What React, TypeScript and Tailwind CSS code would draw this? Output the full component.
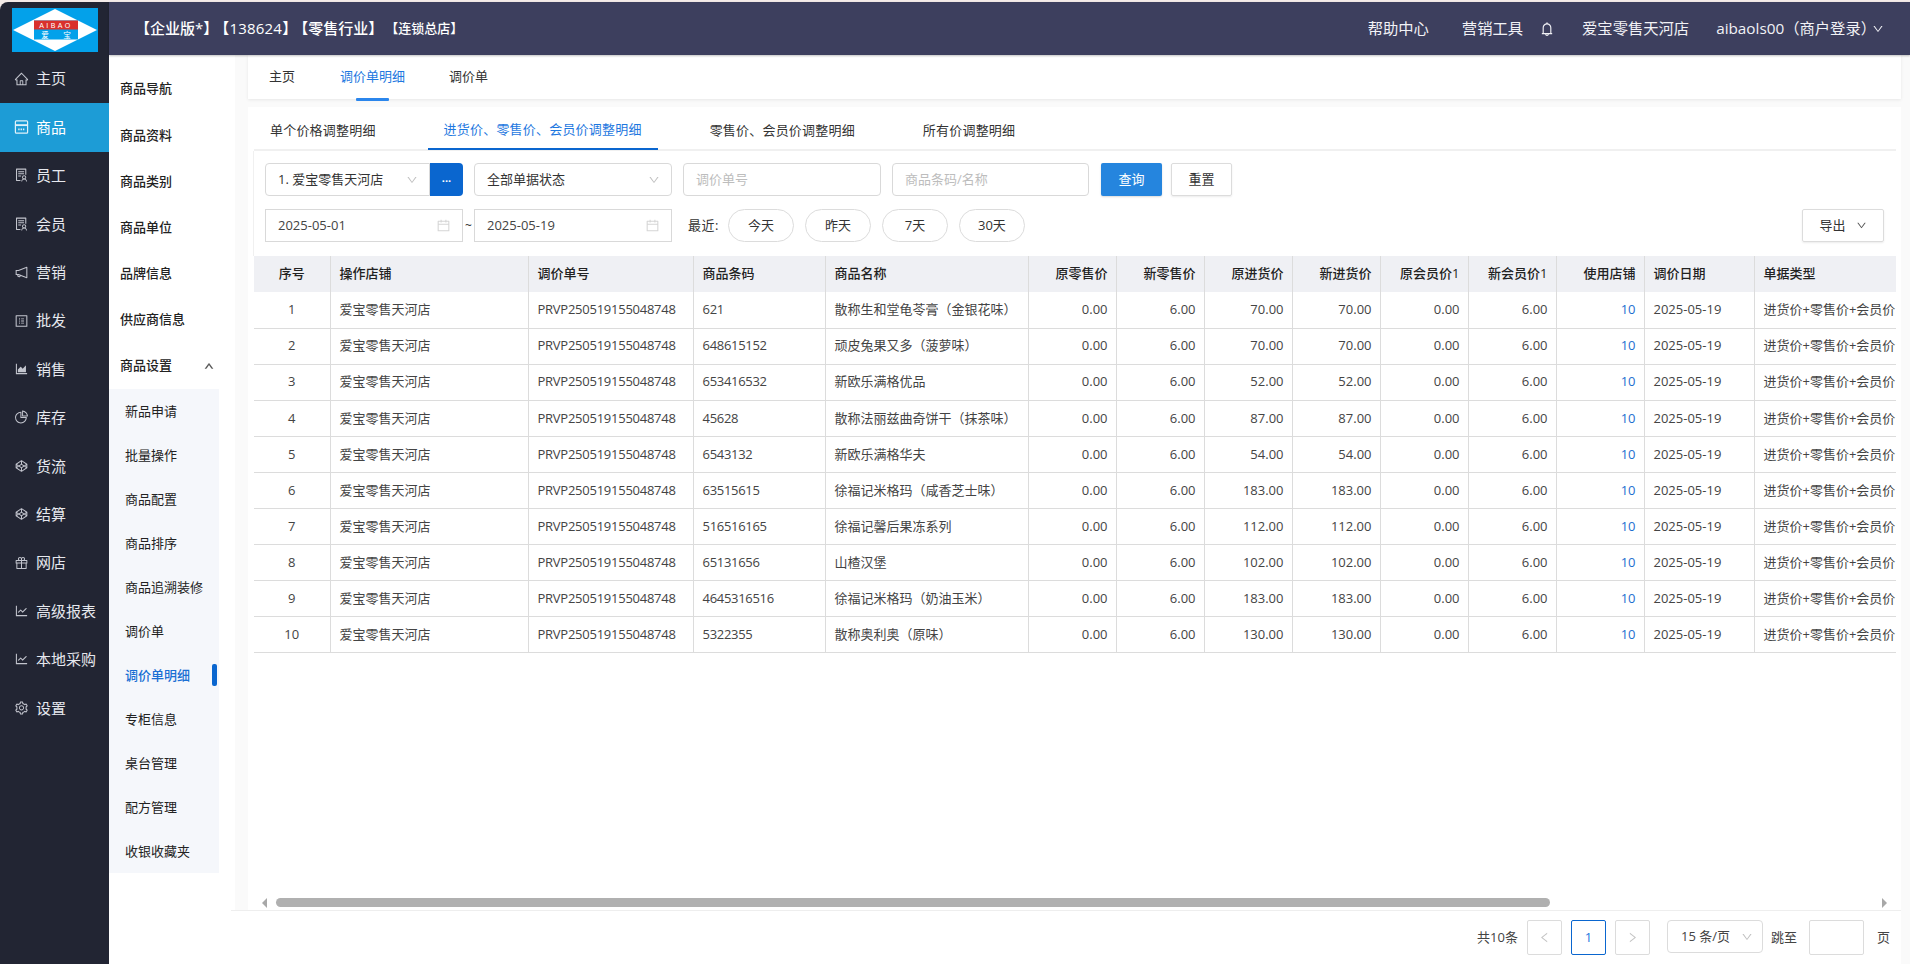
import React from "react";
import {
  AiOutlineHome,
  AiOutlineSolution,
  AiOutlineNotification,
  AiOutlineProfile,
  AiOutlineAreaChart,
  AiOutlinePieChart,
  AiOutlineCodepen,
  AiOutlineGift,
  AiOutlineLineChart,
  AiOutlineSetting,
  AiOutlineBell,
  AiOutlineCalendar,
  AiOutlineDown,
  AiOutlineUp,
  AiOutlineLeft,
  AiOutlineRight,
} from "react-icons/ai";

function GoodsIcon() {
  return (
    <svg width="16" height="16" viewBox="0 0 16 16" fill="none" stroke="currentColor" strokeWidth="1.3">
      <rect x="1.5" y="1.5" width="13" height="13" rx="1" />
      <path d="M1.5 6h13" strokeWidth="2" />
      <path d="M4.5 10.5h7" strokeDasharray="1.5 1" strokeWidth="2" />
    </svg>
  );
}

const nav: [string, React.ReactNode][] = [
  ["主页", <AiOutlineHome size={20} />],
  ["商品", <GoodsIcon />],
  ["员工", <AiOutlineSolution size={18} />],
  ["会员", <AiOutlineSolution size={18} />],
  ["营销", <AiOutlineNotification size={19} />],
  ["批发", <AiOutlineProfile size={18} />],
  ["销售", <AiOutlineAreaChart size={18} />],
  ["库存", <AiOutlinePieChart size={18} />],
  ["货流", <AiOutlineCodepen size={18} />],
  ["结算", <AiOutlineCodepen size={18} />],
  ["网店", <AiOutlineGift size={18} />],
  ["高级报表", <AiOutlineLineChart size={18} />],
  ["本地采购", <AiOutlineLineChart size={18} />],
  ["设置", <AiOutlineSetting size={18} />],
];

const subnav = ["商品导航", "商品资料", "商品类别", "商品单位", "品牌信息", "供应商信息"];
const subsub = ["新品申请", "批量操作", "商品配置", "商品排序", "商品追溯装修", "调价单", "调价单明细", "专柜信息", "桌台管理", "配方管理", "收银收藏夹"];

const rows: [string, string, string][] = [
  ["621", "散称生和堂龟苓膏（金银花味）", "70.00"],
  ["648615152", "顽皮兔果又多（菠萝味）", "70.00"],
  ["653416532", "新欧乐满格优品", "52.00"],
  ["45628", "散称法丽兹曲奇饼干（抹茶味）", "87.00"],
  ["6543132", "新欧乐满格华夫", "54.00"],
  ["63515615", "徐福记米格玛（咸香芝士味）", "183.00"],
  ["516516165", "徐福记馨后果冻系列", "112.00"],
  ["65131656", "山楂汉堡", "102.00"],
  ["4645316516", "徐福记米格玛（奶油玉米）", "183.00"],
  ["5322355", "散称奥利奥（原味）", "130.00"],
];

const leftHeads = ["操作店铺", "调价单号", "商品条码", "商品名称"];
const numHeads = ["原零售价", "新零售价", "原进货价", "新进货价", "原会员价1", "新会员价1", "使用店铺"];

function Logo() {
  return (
    <svg width="86" height="44" viewBox="0 0 86 44" className="block">
      <rect width="86" height="44" fill="#03a1ea" />
      <polygon points="1,22 43,1 85,22 43,43" fill="#ffffff" />
      <rect x="22" y="12.5" width="44" height="19" fill="#03a1ea" />
      <rect x="22" y="12.5" width="44" height="9" fill="#d9302c" />
      <text x="44" y="20" textAnchor="middle" fontSize="7" fill="#ffffff" letterSpacing="2.4" fontFamily="Liberation Sans, sans-serif">AIBAO</text>
      <text x="33" y="30" textAnchor="middle" fontSize="7.5" fill="#ffffff" fontFamily="Noto Sans CJK SC, sans-serif">爱</text>
      <text x="55" y="30" textAnchor="middle" fontSize="7.5" fill="#ffffff" fontFamily="Noto Sans CJK SC, sans-serif">宝</text>
    </svg>
  );
}

function DateBox({ value }: { value: string }) {
  return (
    <div className="w-[198px] h-[33px] border border-[#d9d9d9] flex items-center justify-between pl-3 pr-[11px] text-[13px] text-[#444]">
      <span>{value}</span>
      <AiOutlineCalendar size={15} className="text-[#d5d5d5]" />
    </div>
  );
}

function Pill({ label }: { label: string }) {
  return (
    <div className="w-[66px] h-[33px] rounded-full border border-[#dcdcdc] flex items-center justify-center text-[13px] text-[#333]">
      {label}
    </div>
  );
}

export default function App() {
  return (
    <div className="w-[1910px] h-[964px] overflow-hidden flex flex-col bg-[#f4ebe8] pt-[2px] text-[13px] text-[#333] [font-family:'Open_Sans','Noto_Sans_CJK_SC',sans-serif]">
      <div className="flex flex-1 min-h-0">
        <aside className="w-[109px] shrink-0 bg-[#222533] rounded-tl-[8px] flex flex-col">
          <div className="h-[53px] pt-[6px] pl-[12px]">
            <Logo />
          </div>
          <div>
            {nav.map(([label, icon], i) => (
              <div
                key={label}
                className={
                  i === 1
                    ? "h-[48.4px] flex items-center pl-[14px] gap-[7px] pb-[1px] text-[15px] bg-[#1d9cd6] text-white"
                    : "h-[48.4px] flex items-center pl-[14px] gap-[7px] pb-[1px] text-[15px] text-[#e6e8ee]"
                }
              >
                <span className={i === 1 ? "w-[15px] flex justify-center text-[#dff1fa]" : "w-[15px] flex justify-center text-[#c3c5ce]"}>{icon}</span>
                <span>{label}</span>
              </div>
            ))}
          </div>
        </aside>
        <div className="flex-1 min-w-0 flex flex-col">
          <header className="h-[53px] shrink-0 bg-[#3d3f5e] flex items-center justify-between pl-[26px] pr-[26px] text-white shadow-[0_1px_2px_rgba(0,0,0,0.25)] relative z-10">
            <div className="flex items-center font-medium">
              <span className="text-[15px]">【企业版*】</span>
              <span className="text-[15px] -ml-[4px] tracking-[0.2px]">【138624】</span>
              <span className="text-[15px] -ml-[4px]">【零售行业】</span>
              <span className="text-[13px] ml-[2px]">【连锁总店】</span>
            </div>
            <div className="flex items-center text-[15.3px] text-[#f2f2f6]">
              <span className="mr-[33px]">帮助中心</span>
              <span className="mr-[16px]">营销工具</span>
              <AiOutlineBell size={16} className="mr-[27px]" />
              <span className="mr-[27px]">爱宝零售天河店</span>
              <span className="-mr-[4px]">aibaols00（商户登录）</span>
              <AiOutlineDown size={12} />
            </div>
          </header>
          <div className="flex-1 min-h-0 flex">
            <nav className="w-[126px] shrink-0 bg-white flex flex-col pt-[11px]">
              {subnav.map((s) => (
                <div key={s} className="h-[46.2px] flex items-center pl-[11px] font-medium text-[#222]">{s}</div>
              ))}
              <div className="h-[46.2px] flex items-center justify-between pl-[11px] pr-[21px] font-medium text-[#222]">
                <span>商品设置</span>
                <AiOutlineUp size={10} className="text-[#444]" strokeWidth={60} />
              </div>
              <div className="w-[110px] bg-[#f5f7fb]">
                {subsub.map((s) => (
                  <div key={s} className={s === "调价单明细" ? "relative h-[44px] flex items-center pl-[16px] font-medium text-[#1a6fd4]" : "h-[44px] flex items-center pl-[16px] text-[#222]"}>
                    {s}
                    {s === "调价单明细" && <span className="absolute left-[103px] top-[11px] w-[5px] h-[22px] rounded-[2px] bg-[#0a66cf]" />}
                  </div>
                ))}
              </div>
            </nav>
            <main className="flex-1 min-w-0 bg-[#fafafa] flex flex-col">
              <div className="flex-1 min-h-0 flex flex-col pl-[13px] pr-[9px]">
                <div className="h-[44px] shrink-0 bg-white shadow-[0_1px_3px_rgba(0,0,0,0.08)] flex items-center pl-[21px]">
                  <span className="mr-[45px]">主页</span>
                  <span className="relative mr-[44px] text-[#1e78e0]">
                    调价单明细
                    <span className="absolute left-[16px] right-[16px] top-[31px] h-[3px] rounded-[1px] bg-[#2b86ec]" />
                  </span>
                  <span>调价单</span>
                </div>
                <section className="mt-[8px] flex-1 min-h-0 bg-white pl-[6px] pr-[5px] flex flex-col">
                  <div className="h-[42px] shrink-0 flex gap-9 tracking-[0.2px]">
                    <div className="px-4 h-[43px] pt-[4px] flex items-center">单个价格调整明细</div>
                    <div className="px-4 h-[43px] pt-[4px] flex items-center text-[#1e78e0] border-b-2 border-[#0a66cf] relative z-10">进货价、零售价、会员价调整明细</div>
                    <div className="px-4 h-[43px] pt-[4px] flex items-center">零售价、会员价调整明细</div>
                    <div className="px-4 h-[43px] pt-[4px] flex items-center">所有价调整明细</div>
                  </div>
                  <div className="flex-1 min-h-0 flex flex-col border-t-2 border-[#f0f0f0]">
                    <div className="shrink-0 -ml-[1px] border-l border-[#f0f0f0] pl-[11px] pt-[12px] pb-[14px]">
                      <div className="flex items-center h-[33px]">
                        <div className="w-[165px] h-[33px] border border-[#d9d9d9] rounded-l-[4px] flex items-center justify-between pl-3 pr-[11px]">
                          <span>1. 爱宝零售天河店</span>
                          <AiOutlineDown size={12} className="text-[#c0c0c0]" />
                        </div>
                        <div className="w-[33px] h-[33px] bg-[#0a66cf] rounded-r-[4px] text-white flex items-center justify-center text-[11px] font-bold pb-[2px]">...</div>
                        <div className="ml-[11px] w-[198px] h-[33px] border border-[#d9d9d9] rounded-[4px] flex items-center justify-between pl-3 pr-[11px]">
                          <span>全部单据状态</span>
                          <AiOutlineDown size={12} className="text-[#c0c0c0]" />
                        </div>
                        <div className="ml-[11px] w-[198px] h-[33px] border border-[#d9d9d9] rounded-[4px] flex items-center pl-3 text-[#bdbdbd]">调价单号</div>
                        <div className="ml-[11px] w-[197px] h-[33px] border border-[#d9d9d9] rounded-[4px] flex items-center pl-3 text-[#bdbdbd]">商品条码/名称</div>
                        <div className="ml-[12px] w-[61px] h-[33px] bg-[#2585de] text-white rounded-[2px] flex items-center justify-center shadow-[0_1px_2px_rgba(0,0,0,0.15)]">查询</div>
                        <div className="ml-[9px] w-[61px] h-[33px] border border-[#dcdcdc] rounded-[2px] flex items-center justify-center shadow-[0_1px_2px_rgba(0,0,0,0.08)]">重置</div>
                      </div>
                      <div className="flex items-center h-[33px] mt-[13px] pr-[12px]">
                        <DateBox value="2025-05-01" />
                        <span className="w-[11px] text-center text-[12px]">~</span>
                        <DateBox value="2025-05-19" />
                        <span className="ml-[16px] mr-[9px] tracking-[0.5px]">最近:</span>
                        <div className="flex gap-[11px]">
                          <Pill label="今天" />
                          <Pill label="昨天" />
                          <Pill label="7天" />
                          <Pill label="30天" />
                        </div>
                        <div className="ml-auto w-[82px] h-[33px] border border-[#dcdcdc] rounded-[2px] flex items-center justify-center gap-[10px] shadow-[0_1px_2px_rgba(0,0,0,0.08)]">
                          <span>导出</span>
                          <AiOutlineDown size={11} className="text-[#555]" />
                        </div>
                      </div>
                    </div>
                    <div className="overflow-hidden flex-1 min-h-0">
                      <table className="table-fixed w-[1700px] border-collapse">
                        <colgroup>
                          <col className="w-[76px]" />
                          <col className="w-[198px]" />
                          <col className="w-[165px]" />
                          <col className="w-[132px]" />
                          <col className="w-[203px]" />
                          <col className="w-[88px]" />
                          <col className="w-[88px]" />
                          <col className="w-[88px]" />
                          <col className="w-[88px]" />
                          <col className="w-[88px]" />
                          <col className="w-[88px]" />
                          <col className="w-[88px]" />
                          <col className="w-[110px]" />
                          <col className="w-[200px]" />
                        </colgroup>
                        <thead>
                          <tr className="h-[36px] bg-[#eff0f4] font-medium text-[#222]">
                            <th className="font-medium text-center border-r border-[#dcdcdc]">序号</th>
                            {leftHeads.map((h) => (
                              <th key={h} className="font-medium text-left pl-[9px] border-r border-[#dcdcdc]">{h}</th>
                            ))}
                            {numHeads.map((h) => (
                              <th key={h} className="font-medium text-right pr-[8px] border-r border-[#dcdcdc]">{h}</th>
                            ))}
                            <th className="font-medium text-left pl-[9px] border-r border-[#dcdcdc]">调价日期</th>
                            <th className="font-medium text-left pl-[9px]">单据类型</th>
                          </tr>
                        </thead>
                        <tbody>
                          {rows.map((r, i) => {
                            const cell = "border-r border-b border-[#dcdcdc]";
                            return (
                              <tr key={i} className="h-[36.1px] text-[#444]">
                                <td className={`${cell} text-center`}>{i + 1}</td>
                                <td className={`${cell} pl-[9px]`}>爱宝零售天河店</td>
                                <td className={`${cell} pl-[9px] tracking-[-0.25px]`}>PRVP250519155048748</td>
                                <td className={`${cell} pl-[9px] tracking-[-0.3px]`}>{r[0]}</td>
                                <td className={`${cell} pl-[9px] whitespace-nowrap`}>{r[1]}</td>
                                <td className={`${cell} pr-[8px] text-right`}>0.00</td>
                                <td className={`${cell} pr-[8px] text-right`}>6.00</td>
                                <td className={`${cell} pr-[8px] text-right`}>{r[2]}</td>
                                <td className={`${cell} pr-[8px] text-right`}>{r[2]}</td>
                                <td className={`${cell} pr-[8px] text-right`}>0.00</td>
                                <td className={`${cell} pr-[8px] text-right`}>6.00</td>
                                <td className={`${cell} pr-[8px] text-right text-[#1e6fd0]`}>10</td>
                                <td className={`${cell} pl-[9px]`}>2025-05-19</td>
                                <td className="border-b border-[#dcdcdc] pl-[9px] whitespace-nowrap">进货价+零售价+会员价</td>
                              </tr>
                            );
                          })}
                        </tbody>
                      </table>
                    </div>
                    <div className="h-[13px] shrink-0 flex items-center pl-[8px] pr-[9px] pb-[2px]">
                      <span className="w-0 h-0 border-y-[5px] border-y-transparent border-r-[5px] border-r-[#a8a8a8]" />
                      <div className="ml-[9px] w-[1274px] h-[9px] rounded-full bg-[#b0b0b0]" />
                      <span className="ml-auto w-0 h-0 border-y-[5px] border-y-transparent border-l-[5px] border-l-[#a8a8a8]" />
                    </div>
                  </div>
                </section>
              </div>
              <footer className="h-[54px] shrink-0 -ml-[4px] mr-[9px] bg-white border-t border-[#eeeeee] flex items-start justify-end pt-[9px] pr-[11px] text-[13px] text-[#444]">
                <span className="h-[35px] flex items-center mr-[9px]">共10条</span>
                <div className="w-[35px] h-[35px] border border-[#dcdcdc] rounded-[2px] flex items-center justify-center text-[#c4c4c4]"><AiOutlineLeft size={13} /></div>
                <div className="ml-[9px] w-[35px] h-[35px] border border-[#0a66cf] rounded-[2px] flex items-center justify-center text-[#1e78e0]">1</div>
                <div className="ml-[9px] w-[35px] h-[35px] border border-[#dcdcdc] rounded-[2px] flex items-center justify-center text-[#c4c4c4]"><AiOutlineRight size={13} /></div>
                <div className="ml-[17px] w-[96px] h-[33px] border border-[#dcdcdc] rounded-[4px] flex items-center justify-between pl-[13px] pr-[9px]">
                  <span>15 条/页</span>
                  <AiOutlineDown size={12} className="text-[#c0c0c0]" />
                </div>
                <span className="ml-[8px] h-[35px] flex items-center">跳至</span>
                <div className="ml-[12px] w-[55px] h-[35px] border border-[#dcdcdc] rounded-[2px]" />
                <span className="ml-[13px] h-[35px] flex items-center">页</span>
              </footer>
            </main>
          </div>
        </div>
      </div>
    </div>
  );
}
